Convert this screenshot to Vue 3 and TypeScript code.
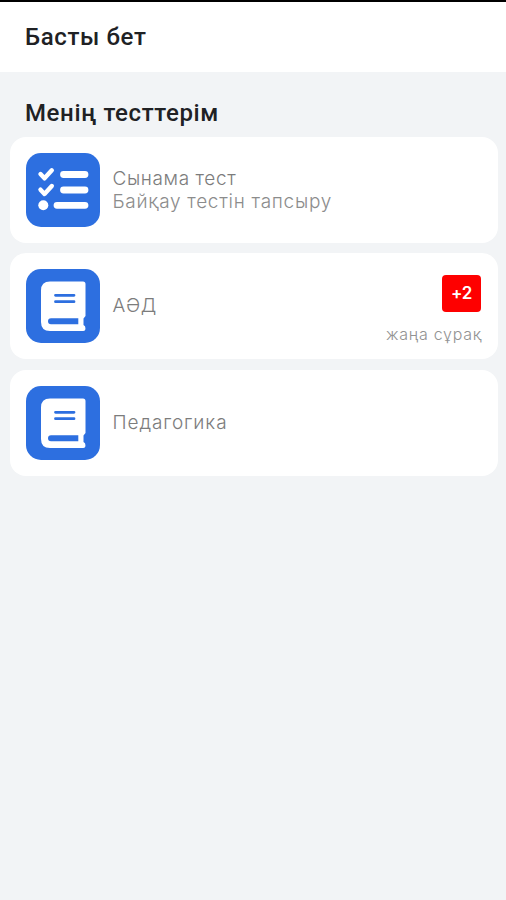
<script setup lang="ts">
interface TestItem {
  id: string
  icon: 'checklist' | 'book'
  title: string
  subtitle?: string
  badge?: string
  note?: string
}

const tests: TestItem[] = [
  { id: 'trial', icon: 'checklist', title: 'Сынама тест', subtitle: 'Байқау тестін тапсыру' },
  { id: 'aed', icon: 'book', title: 'АӘД', badge: '+2', note: 'жаңа сұрақ' },
  { id: 'pedagogy', icon: 'book', title: 'Педагогика' },
]
</script>

<template>
  <div class="screen">
    <div class="status-bar"></div>
    <header class="header">
      <h1 class="heading page-title">Басты бет</h1>
    </header>
    <main class="content">
      <h2 class="heading section-title">Менің тесттерім</h2>
      <div class="list">
        <article v-for="t in tests" :key="t.id" class="card" :class="t.id">
          <svg v-if="t.icon === 'checklist'" class="icon" viewBox="0 0 74 74">
            <rect width="74" height="74" rx="15" fill="#2d6fe0" />
            <g fill="none" stroke="#fff" stroke-linecap="round" stroke-linejoin="round">
              <path d="M14.500 21l4 4.300 7.300-8M14.500 36.700l4 4.300 7.300-8" stroke-width="4.400" />
              <path d="M37.500 21.500h21.500M37.500 37h21.500M31 52.300h28" stroke-width="6.800" />
            </g>
            <circle cx="17.300" cy="52.300" r="5" fill="#fff" />
          </svg>
          <svg v-else class="icon" viewBox="0 0 74 74">
            <rect width="74" height="74" rx="15" fill="#2d6fe0" />
            <path
              d="M24 12.500h33q2.500 0 2.500 2.500v32l-2 2.500v6.500l1.500 1.200q1.500 4.500-2 4.800H24q-9 0-9-9v-31.500q0-9 9-9z"
              fill="#fff"
            />
            <path d="M29.500 26.300h18.500M29.500 32.700h18.500" stroke="#2d6fe0" stroke-width="2.800" stroke-linecap="round" />
            <path d="M25 49.300h27.300v6H25a3 3 0 0 1 0-6z" fill="#2d6fe0" />
          </svg>
          <div class="labels">
            <span class="title">{{ t.title }}</span>
            <span v-if="t.subtitle" class="subtitle">{{ t.subtitle }}</span>
          </div>
          <div v-if="t.badge" class="extra">
            <span class="badge">{{ t.badge }}</span>
            <span class="note">{{ t.note }}</span>
          </div>
        </article>
      </div>
    </main>
  </div>
</template>

<style>
body {
  margin: 0;
  background: #f2f4f6;
}
</style>

<style scoped>
.screen {
  box-sizing: border-box;
  min-height: 900px;
  background: #f2f4f6;
  font-family: Inter, 'Noto Sans', sans-serif;
}
.status-bar {
  height: 2px;
  background: #000;
}
.header {
  box-sizing: border-box;
  height: 70px;
  padding: 20px 25px 0;
  background: #fff;
}
.heading {
  margin: 0;
  font-family: Roboto, sans-serif;
  font-size: 24px;
  line-height: 30px;
  font-weight: 500;
  letter-spacing: 0.62px;
  color: #202124;
  white-space: nowrap;
}
.content {
  padding: 26px 8px 0 10px;
}
.section-title {
  padding-left: 15px;
}
.list {
  display: flex;
  flex-direction: column;
  gap: 10.400px;
  margin-top: 9px;
}
.card {
  box-sizing: border-box;
  display: flex;
  align-items: flex-start;
  height: 106px;
  padding: 16px 16px 0;
  border-radius: 16px;
  background: #fff;
}
.icon {
  flex: none;
  width: 74px;
  height: 74px;
}
.labels {
  display: flex;
  flex-direction: column;
  justify-content: center;
  height: 74px;
  margin-left: 12.500px;
  font-size: 19px;
  line-height: 23px;
  font-weight: 300;
  letter-spacing: 0.6px;
  color: #7c7c7c;
  white-space: nowrap;
}
.subtitle {
  letter-spacing: 0.7px;
  color: #8c8c8c;
}
.aed .labels {
  height: 73px;
}
.pedagogy .title {
  letter-spacing: 0.9px;
}
.extra {
  display: flex;
  flex-direction: column;
  align-items: flex-end;
  margin: 6px 1px 0 auto;
}
.badge {
  width: 39px;
  height: 37px;
  border-radius: 4px;
  background: #fe0000;
  color: #fff;
  font-size: 17px;
  line-height: 37px;
  font-weight: 600;
  letter-spacing: -0.3px;
  text-align: center;
}
.note {
  margin: 12px -1px 0 0;
  font-size: 16px;
  line-height: 20px;
  font-weight: 300;
  letter-spacing: 0.7px;
  color: #929292;
  white-space: nowrap;
}
</style>
